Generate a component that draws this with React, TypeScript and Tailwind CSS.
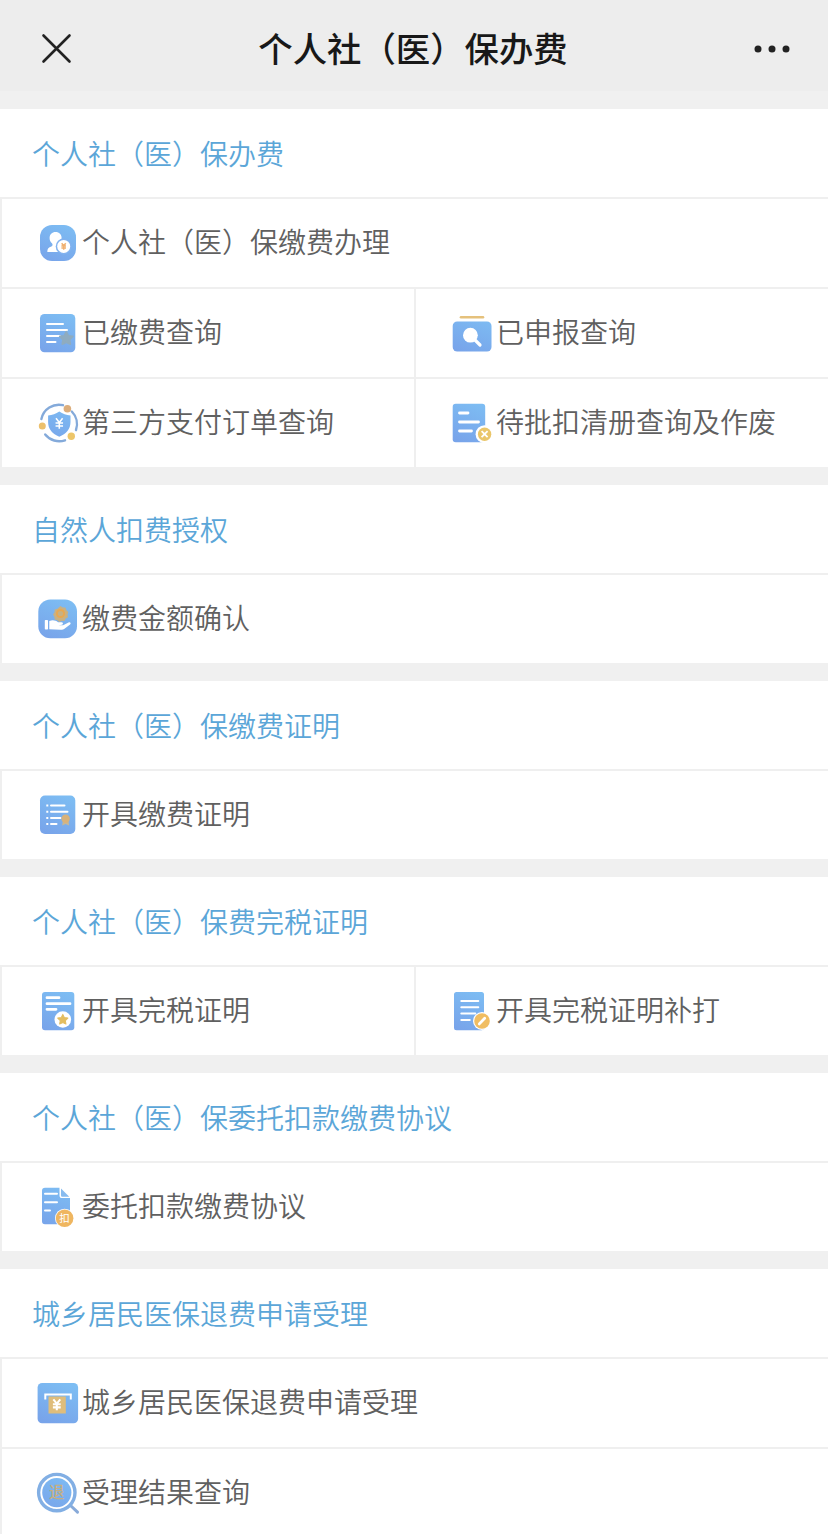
import type { ReactNode } from "react";

const FILL = "url(#icon-blue)";

function Icon({ children }: { children: ReactNode }) {
  return (
    <svg width="44" height="44" viewBox="0 0 44 44" fill="none" className="shrink-0">
      {children}
    </svg>
  );
}

function Gradients() {
  return (
    <svg width="0" height="0" className="absolute">
      <defs>
        <linearGradient id="icon-blue" gradientUnits="userSpaceOnUse" x1="30" y1="2" x2="14" y2="42">
          <stop offset="0" stopColor="#7dbdf3" />
          <stop offset="1" stopColor="#78a4ea" />
        </linearGradient>
      </defs>
    </svg>
  );
}

const STAR = "M0 -6 L1.9 -2.2 L6 -1.7 L3 1.3 L3.7 5.4 L0 3.5 L-3.7 5.4 L-3 1.3 L-6 -1.7 L-1.9 -2.2 Z";
const YEN = "M-3 -4.5 L0 -0.8 L3 -4.5 M0 -0.8 V5 M-3.4 -0.3 H3.4 M-3.4 2.4 H3.4";

const PersonCoin = () => (
  <Icon>
    <rect x="4" y="4" width="36" height="36" rx="12" fill={FILL} />
    <path d="M19.6 11c3.6 0 6 2.5 6 5.8 0 2.3-.9 4-2.2 5.2-1 .9-.6 2.5.6 3.2V31H11.3c0-3.2 1.4-4.6 4-5.4 1.5-.5 1.6-2.300.6-3.300-1.400-1.300-2.300-3.100-2.300-5.400 0-3.400 2.400-5.900 6-5.900Z" fill="#fff" />
    <circle cx="27.7" cy="25.4" r="8" fill="#82b2ef" />
    <circle cx="27.7" cy="25.4" r="6.5" fill="#fff" />
    <path d={YEN} transform="translate(27.7 25.3) scale(.68)" stroke="#f0b070" strokeWidth="2.2" />
  </Icon>
);

const DocStar = () => (
  <Icon>
    <rect x="4" y="3" width="35.3" height="38.2" rx="4.5" fill={FILL} />
    <path d="M11 13h16M11 19h20M11 25h13M11 31h8.5" stroke="#fff" strokeWidth="2" strokeLinecap="round" />
    <path d={STAR} transform="translate(30.3 27.3) scale(1.1)" fill="#8facc0" stroke="#8facc0" strokeWidth="1.5" strokeLinejoin="round" />
  </Icon>
);

const ShieldOrbit = () => (
  <Icon>
    <path d="M5.400 18A18 18 0 0 1 27 4.200M35.800 10.500A18 18 0 0 1 40 29M9.200 33.500A18 18 0 0 0 29 39.300" stroke="#84aada" strokeWidth="2.4" strokeLinecap="round" />
    <path d="M23.300 10.500c3.400 2.400 7 3.600 11.200 4v6.500c0 7.200-4.300 11.700-11.200 14.700-6.900-3-11.200-7.500-11.200-14.700v-6.500c4.200-.4 7.800-1.600 11.200-4Z" fill={FILL} />
    <path d={YEN} transform="translate(23.3 22.3) scale(1.1)" stroke="#fff" strokeWidth="1.4" />
    <circle cx="31.4" cy="7.7" r="3.8" fill="#dcae7c" />
    <circle cx="6.3" cy="25" r="3.5" fill="#ecc06c" />
    <circle cx="35.3" cy="35.3" r="3.7" fill="#edc66a" />
  </Icon>
);

const FolderSearch = () => (
  <Icon>
    <path d="M11 6.200h22" stroke="#e5c17c" strokeWidth="2.6" strokeLinecap="round" />
    <rect x="2.7" y="10.5" width="38.8" height="30" rx="4.5" fill={FILL} />
    <circle cx="20.4" cy="24.2" r="7.4" fill="#fff" />
    <path d="m24.500 28.500 5.500 5.500" stroke="#fff" strokeWidth="3.2" strokeLinecap="round" />
  </Icon>
);

const DocCross = () => (
  <Icon>
    <rect x="2.7" y="2.7" width="32.5" height="38.5" rx="3" fill={FILL} />
    <path d="M9.500 12h8.500M9.500 21h19M9.500 30h12" stroke="#fff" strokeWidth="2.8" strokeLinecap="round" />
    <circle cx="34.6" cy="33.2" r="9" fill="#fff" />
    <circle cx="34.6" cy="33.2" r="6.7" fill="#eac66a" />
    <path d="m31.600 30.200 6 6m0-6-6 6" stroke="#fff" strokeWidth="1.8" />
  </Icon>
);

const HandCoin = () => (
  <Icon>
    <rect x="2.3" y="2.5" width="38.7" height="38.7" rx="12" fill={FILL} />
    <path d="m24.500 9 2.200 1.500 2.700.1.900 2.500 2 1.800-.8 2.600.5 2.700-2.300 1.400-1.300 2.400-2.700-.2-2.300 1.200-2.100-1.800-2.600-.8-.3-2.700-1.400-2.300 1.500-2.200.3-2.700 2.600-.8Z" fill="#c9b183" />
    <circle cx="24.5" cy="16.5" r="3.6" stroke="#e8a852" strokeWidth="2" />
    <rect x="8.8" y="23" width="3.2" height="9.5" rx=".7" fill="#fff" />
    <path d="M13.300 24c3.400-1.300 6.200-.7 8.700 1.200h3.500c1.700 0 2 2.100.4 2.500l-3.300.5h4.500l5.400-2.700c1.700-.8 2.900.7 1.600 1.900l-5.600 4.300c-1.300.9-2.300 1.200-3.900 1.100l-11.300-.6Z" fill="#fff" />
  </Icon>
);

const ListRibbon = () => (
  <Icon>
    <rect x="4" y="2.5" width="35.3" height="38.5" rx="5" fill={FILL} />
    <path d="M10.300 12.600h2M10.300 18.800h2M10.300 25h2M10.300 31h2" stroke="#fff" strokeWidth="2" />
    <path d="M15 12.600h13.500M15 18.800h16.500M15 25h9.500M15 31h5.500" stroke="#fff" strokeWidth="2" strokeLinecap="round" />
    <path d="m26.800 28-.6 4.600 3.400-1.500 3.500 1.500-.6-4.600" fill="#c9b795" />
    <circle cx="29.6" cy="25.8" r="4.2" fill="#d8b27a" />
  </Icon>
);

const DocStarBadge = () => (
  <Icon>
    <rect x="6" y="3" width="32.3" height="38.3" rx="3" fill={FILL} />
    <path d="M11 8.700h12M11 14.700h23M11 20.300h9" stroke="#fff" strokeWidth="2.8" strokeLinecap="round" />
    <circle cx="26.8" cy="30.5" r="8.3" fill="#fff" />
    <path d={STAR} transform="translate(26.8 30.5) scale(.85)" fill="#e3bd60" stroke="#e3bd60" strokeWidth="1.2" strokeLinejoin="round" />
  </Icon>
);

const DocPencil = () => (
  <Icon>
    <rect x="4" y="3" width="30" height="38.3" rx="2.5" fill={FILL} />
    <path d="M11.300 12h17M11.300 18.200h17M11.300 24.500h14M11.300 31h8.500" stroke="#fff" strokeWidth="2" strokeLinecap="round" />
    <circle cx="32" cy="32" r="9" fill="#fff" />
    <circle cx="32" cy="32" r="7.8" fill="#f0bd62" />
    <path d="m29.300 34.900 5.400-5.700" stroke="#fff" strokeWidth="2.8" strokeLinecap="round" />
  </Icon>
);

const DocDeduct = () => (
  <Icon>
    <path d="M9 2.700h14.500v7.800c0 1.700.9 2.600 2.600 2.600h7.900v26.200H9a3 3 0 0 1-3-3V5.700a3 3 0 0 1 3-3Z" fill={FILL} />
    <path d="m25 3.500 8.300 8.300H26.500c-1 0-1.500-.5-1.500-1.500Z" fill="#87bbef" />
    <path d="M9 8.700h12M9 17.300h12M9 25.600h5" stroke="#fff" strokeWidth="2" strokeLinecap="round" />
    <circle cx="28.6" cy="33.3" r="9.6" fill="#fff" />
    <circle cx="28.6" cy="33.3" r="8.8" fill="#efb660" />
    <text x="28.6" y="37.1" fontSize="10.5" fontWeight="400" textAnchor="middle" fill="#fff">扣</text>
  </Icon>
);

const RefundSlot = () => (
  <Icon>
    <rect x="1.6" y="2" width="40.5" height="40.3" rx="4.5" fill={FILL} />
    <path d="M9.300 18.500v-5h25.500v5" stroke="#fff" strokeWidth="2" />
    <path d="M12.500 15.500h17.300v17H12.500Z" fill="#dfbd7b" />
    <path d={YEN} transform="translate(20.8 23.6) scale(1.15)" stroke="#fff" strokeWidth="1.8" />
  </Icon>
);

const RefundSearch = () => (
  <Icon>
    <path d="m34.500 34.500 7 6.700" stroke="#88aad9" strokeWidth="3" strokeLinecap="round" />
    <circle cx="20.8" cy="21.6" r="18.2" fill="#fff" stroke="#82afe4" strokeWidth="3.4" />
    <circle cx="20.8" cy="21.6" r="14.6" fill={FILL} />
    <text x="20.8" y="27.200" fontSize="15.5" fontWeight="500" textAnchor="middle" fill="#c5af80">退</text>
  </Icon>
);

type Item = { label: string; icon: () => ReactNode };
type Section = { title: string; rows: Item[][] };

const SECTIONS: Section[] = [
  {
    title: "个人社（医）保办费",
    rows: [
      [{ label: "个人社（医）保缴费办理", icon: PersonCoin }],
      [
        { label: "已缴费查询", icon: DocStar },
        { label: "已申报查询", icon: FolderSearch },
      ],
      [
        { label: "第三方支付订单查询", icon: ShieldOrbit },
        { label: "待批扣清册查询及作废", icon: DocCross },
      ],
    ],
  },
  { title: "自然人扣费授权", rows: [[{ label: "缴费金额确认", icon: HandCoin }]] },
  { title: "个人社（医）保缴费证明", rows: [[{ label: "开具缴费证明", icon: ListRibbon }]] },
  {
    title: "个人社（医）保费完税证明",
    rows: [
      [
        { label: "开具完税证明", icon: DocStarBadge },
        { label: "开具完税证明补打", icon: DocPencil },
      ],
    ],
  },
  { title: "个人社（医）保委托扣款缴费协议", rows: [[{ label: "委托扣款缴费协议", icon: DocDeduct }]] },
  {
    title: "城乡居民医保退费申请受理",
    rows: [
      [{ label: "城乡居民医保退费申请受理", icon: RefundSlot }],
      [{ label: "受理结果查询", icon: RefundSearch }],
    ],
  },
];

function Header() {
  return (
    <header className="flex h-[91px] items-center justify-between bg-[#ededed] pt-1.5 pr-[37px] pl-[41px]">
      <svg width="31" height="31" viewBox="0 0 31 31" fill="none" stroke="#222" strokeWidth="2.6" strokeLinecap="round">
        <path d="m2.500 2.500 26 26m0-26-26 26" />
      </svg>
      <h1 className="pb-1 pl-px text-[34.4px] leading-[48px] font-medium text-[#181818]">个人社（医）保办费</h1>
      <svg width="38" height="10" viewBox="0 0 38 10" fill="#222">
        <circle cx="5" cy="5" r="3.500" />
        <circle cx="19" cy="5" r="3.500" />
        <circle cx="33" cy="5" r="3.500" />
      </svg>
    </header>
  );
}

export default function App() {
  return (
    <div className="h-[1534px] w-[828px] overflow-hidden bg-[#f0f0f0] font-['Noto_Sans_CJK_SC',sans-serif]">
      <Gradients />
      <Header />
      <main className="flex flex-col gap-[18px] pt-[18px]">
        {SECTIONS.map((section) => (
          <section key={section.title} className="bg-white">
            <h2 className="flex h-[88px] items-center pb-px pl-8 text-[28px] leading-10 font-[350] text-[#5ba6d8]">{section.title}</h2>
            {section.rows.map((row) => (
              <div key={row[0].label} className="flex h-[90px] border-t-2 border-[#efefef]">
                {row.map(({ label, icon: Glyph }) => (
                  <div key={label} className="flex flex-1 items-center border-l-2 border-[#efefef] pl-[34px]">
                    <Glyph />
                    <span className="pb-[5px] pl-0.5 text-[28px] leading-10 font-[350] whitespace-nowrap text-[#606060]">{label}</span>
                  </div>
                ))}
              </div>
            ))}
          </section>
        ))}
      </main>
    </div>
  );
}
